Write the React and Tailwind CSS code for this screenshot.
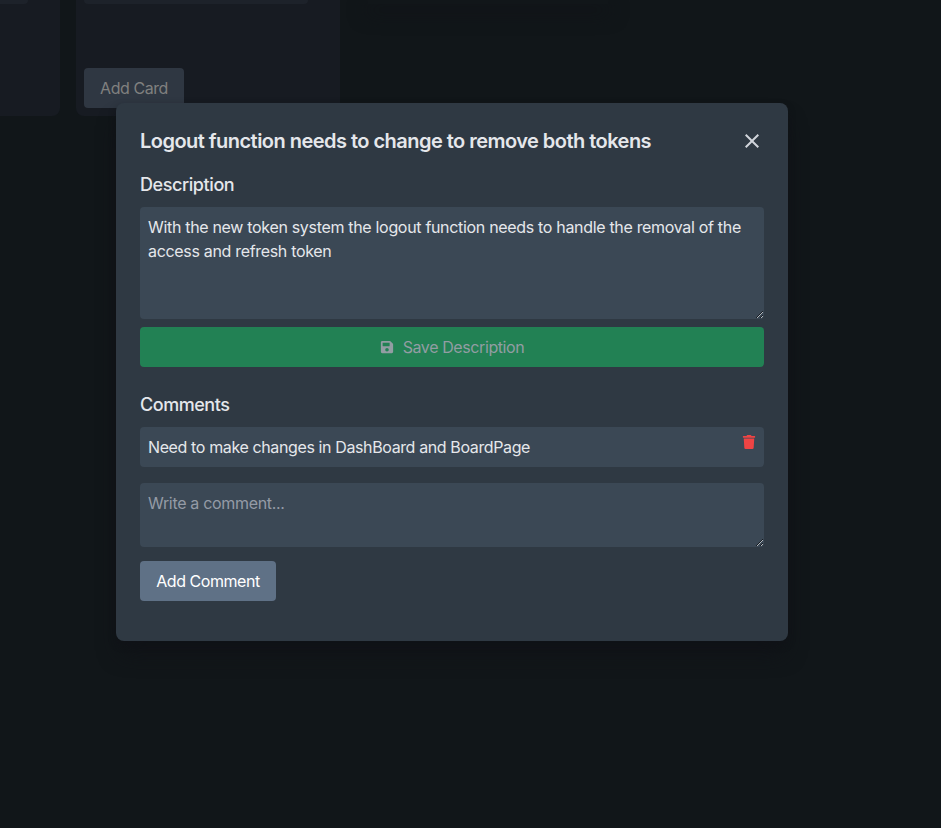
import { FaSave, FaTrash } from "react-icons/fa";
import { MdClose } from "react-icons/md";

function Column({ className = "", children }) {
  return (
    <section className={"h-[116px] shrink-0 rounded-b-lg bg-[#171b22] px-2 pb-2 " + className}>
      <div className="h-1 w-56 rounded-b bg-[#1d222a]" />
      {children}
    </section>
  );
}

function Board() {
  return (
    <div className="flex items-start gap-4 overflow-hidden">
      <Column className="-ml-[204px] w-[264px]" />
      <Column className="w-[264px]">
        <button className="mt-16 h-10 w-[100px] rounded bg-[#2f3742] px-4 whitespace-nowrap tracking-[-0.44px] text-[#80807f]">Add Card</button>
      </Column>
      <div className="ml-3 h-1 w-60 shadow-[0_8px_18px_2px_#111418]" />
    </div>
  );
}

function CardModal() {
  return (
    <div className="h-[538px] w-[672px] rounded-lg bg-[#2f3943] p-6 text-[#e5e7eb] shadow-[0_16px_22px_-5px_#101217,0_4px_8px_-2px_#101217]">
      <header className="mb-4 flex h-7 items-center justify-between">
        <h2 className="text-xl font-[620] tracking-[-0.53px]">Logout function needs to change to remove both tokens</h2>
        <button className="text-[#d1d5db]"><MdClose size={24} /></button>
      </header>
      <h3 className="mb-2 text-lg font-[530] tracking-[-0.42px]">Description</h3>
      <textarea
        className="block h-28 w-full rounded bg-[#3b4855] p-2 tracking-[-0.32px]"
        defaultValue="With the new token system the logout function needs to handle the removal of the access and refresh token"
      />
      <button className="mt-2 mb-6 flex h-10 w-full items-center justify-center gap-[9px] rounded bg-[#228154] tracking-[-0.4px] text-[#929da3]">
        <FaSave size={14} />
        Save Description
      </button>
      <h3 className="mb-2 text-lg font-[530] tracking-[-0.46px]">Comments</h3>
      <div className="mb-4 flex h-10 items-start justify-between rounded bg-[#3b4855] p-2">
        <p className="tracking-[-0.38px]">Need to make changes in DashBoard and BoardPage</p>
        <button className="text-[#ef4444]"><FaTrash size={14} /></button>
      </div>
      <textarea
        className="mb-3.5 block h-16 w-full rounded bg-[#3b4855] p-2 tracking-[-0.32px] placeholder:text-[#949ba6]"
        placeholder="Write a comment..."
      />
      <button className="h-10 w-[136px] rounded bg-[#5f7186] px-4 whitespace-nowrap tracking-[-0.44px] text-white">Add Comment</button>
    </div>
  );
}

export default function App() {
  return (
    <main className="relative h-[828px] w-full overflow-hidden bg-[#111619] font-['Inter',sans-serif] text-base font-[425]">
      <Board />
      <div className="absolute inset-0 pt-[103px] pl-[116px]">
        <CardModal />
      </div>
    </main>
  );
}
